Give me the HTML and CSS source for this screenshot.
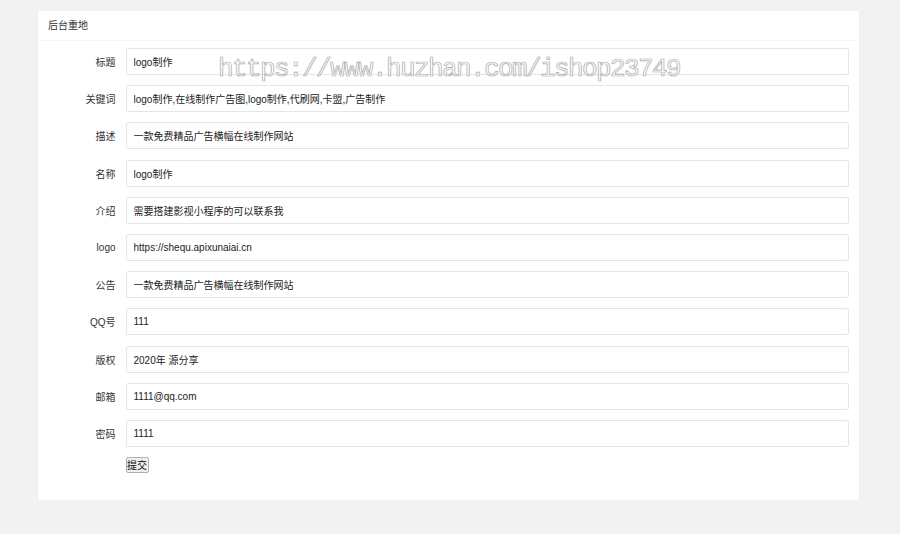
FILE: index.html
```html
<!DOCTYPE html>
<html lang="zh-CN">
<head>
<meta charset="utf-8">
<title>后台重地</title>
<link rel="stylesheet" href="styles.css">
</head>
<body>
<div class="page">
  <div class="card">
    <div class="card-header">后台重地</div>
    <form class="card-body">
      <div class="form-item"><label class="form-label">标题</label><input class="form-input" value="logo制作"></div>
      <div class="form-item"><label class="form-label">关键词</label><input class="form-input" value="logo制作,在线制作广告图,logo制作,代刷网,卡盟,广告制作"></div>
      <div class="form-item"><label class="form-label">描述</label><input class="form-input" value="一款免费精品广告横幅在线制作网站"></div>
      <div class="form-item"><label class="form-label">名称</label><input class="form-input" value="logo制作"></div>
      <div class="form-item"><label class="form-label">介绍</label><input class="form-input" value="需要搭建影视小程序的可以联系我"></div>
      <div class="form-item"><label class="form-label">logo</label><input class="form-input" value="https://shequ.apixunaiai.cn"></div>
      <div class="form-item"><label class="form-label">公告</label><input class="form-input" value="一款免费精品广告横幅在线制作网站"></div>
      <div class="form-item"><label class="form-label">QQ号</label><input class="form-input" value="111"></div>
      <div class="form-item"><label class="form-label">版权</label><input class="form-input" value="2020年 源分享"></div>
      <div class="form-item"><label class="form-label">邮箱</label><input class="form-input" value="1111@qq.com"></div>
      <div class="form-item"><label class="form-label">密码</label><input class="form-input" value="1111"></div>
      <div class="form-actions"><button type="button" class="btn-submit">提交</button></div>
    </form>
  </div>
</div>
<div class="watermark">https://www.huzhan.com/ishop23749</div>
</body>
</html>
```
FILE: styles.css
```css
html, body {
  margin: 0;
  padding: 0;
  background: #f2f2f2;
  font-family: "Liberation Sans", "Noto Sans CJK SC", sans-serif;
  font-size: 10px;
  color: #333;
}

.page {
  padding: 11px 41px 0 38px;
}

.card {
  background: #fff;
  border-radius: 1px;
  box-shadow: 0 1px 2px 0 rgba(0, 0, 0, 0.05);
}

.card-header {
  height: 29px;
  line-height: 29px;
  padding: 0 10px;
  border-bottom: 1px solid #f6f6f6;
  color: #333;
  font-size: 10px;
}

.card-body {
  margin: 0;
  padding: 7px 10px 27px 0;
}

.form-item {
  display: flex;
  align-items: center;
  height: 27px;
  margin-bottom: 10.2px;
}

.form-label {
  width: 77.5px;
  padding-right: 10px;
  text-align: right;
  color: #333;
  flex: none;
}

.form-input {
  flex: 1;
  min-width: 0;
  height: 27px;
  box-sizing: border-box;
  border: 1px solid #e6e6e6;
  border-radius: 2px;
  padding: 0 7px;
  font-family: "Liberation Sans", "Noto Sans CJK SC", sans-serif;
  font-size: 10px;
  color: #222;
  background: #fff;
  outline: none;
}

.form-actions {
  padding-left: 87.5px;
  display: flex;
}

.btn-submit {
  height: 16px;
  padding: 0;
  width: 23px;
  font-family: "Noto Sans CJK SC", sans-serif;
  font-size: 10px;
  line-height: 14px;
  color: #111;
  background: #efefef;
  border: 1px solid #b0b0b0;
  border-radius: 2px;
}

.watermark {
  position: absolute;
  left: 218px;
  top: 54px;
  font-family: "Liberation Mono", monospace;
  font-size: 26px;
  letter-spacing: -1.6px;
  color: rgba(255, 255, 255, 0.5);
  -webkit-text-stroke: 0.7px #a8a8a8;
  white-space: nowrap;
  pointer-events: none;
}
```
